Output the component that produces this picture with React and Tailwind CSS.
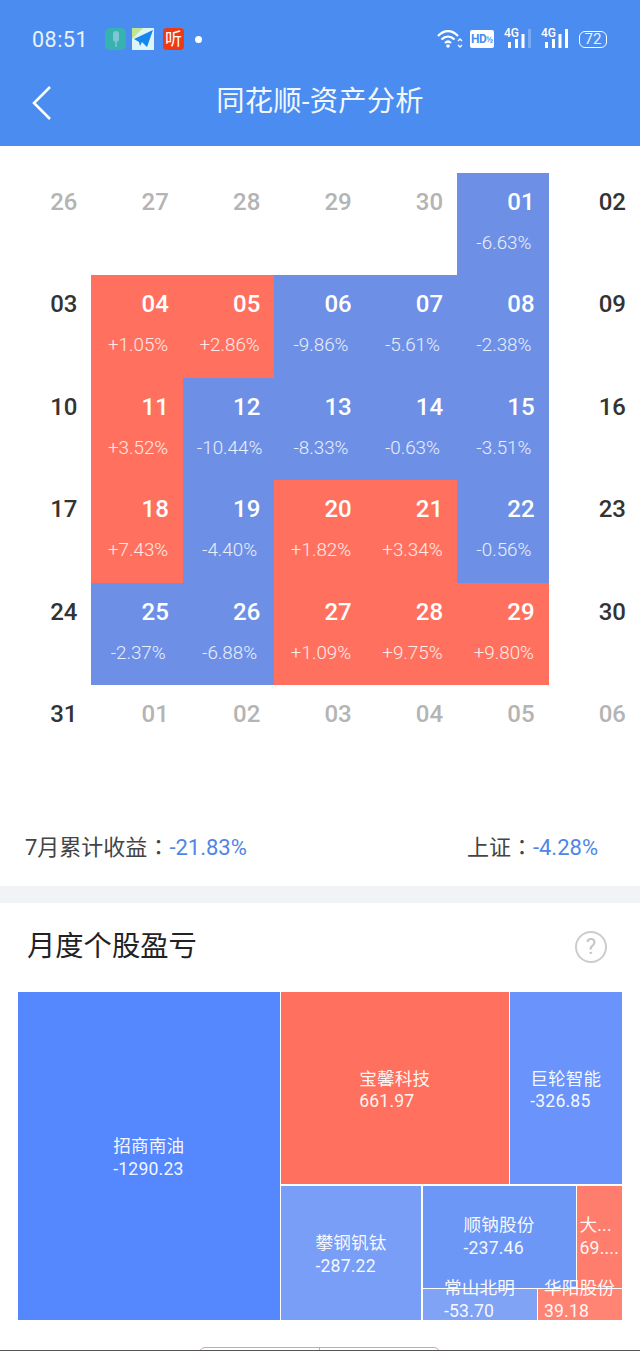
const font = { fontFamily: '"Roboto","Noto Sans CJK SC",sans-serif' };

const weeks = [
  [["26"],["27"],["28"],["29"],["30"],["01","-6.63%","b"],["02",null,null,1]],
  [["03",null,null,1],["04","+1.05%","r"],["05","+2.86%","r"],["06","-9.86%","b"],["07","-5.61%","b"],["08","-2.38%","b"],["09",null,null,1]],
  [["10",null,null,1],["11","+3.52%","r"],["12","-10.44%","b"],["13","-8.33%","b"],["14","-0.63%","b"],["15","-3.51%","b"],["16",null,null,1]],
  [["17",null,null,1],["18","+7.43%","r"],["19","-4.40%","b"],["20","+1.82%","r"],["21","+3.34%","r"],["22","-0.56%","b"],["23",null,null,1]],
  [["24",null,null,1],["25","-2.37%","b"],["26","-6.88%","b"],["27","+1.09%","r"],["28","+9.75%","r"],["29","+9.80%","r"],["30",null,null,1]],
  [["31",null,null,1],["01"],["02"],["03"],["04"],["05"],["06"]],
];

function Cell({ d, p, c, dark }) {
  const bg = c === "b" ? "bg-[#6d90e6]" : c === "r" ? "bg-[#ff715e]" : "";
  const dc = c ? "text-white" : dark ? "text-[#333333]" : "text-[#b4b4b4]";
  return (
    <div className={`${bg} flex flex-col h-[102.4px]`}>
      <div className={`${dc} text-[24px] leading-[28px] font-medium text-right pr-[14px] pt-[15px] tabular-nums`}>{d}</div>
      {p && <div className="text-[18.8px] leading-[20px] text-center pl-[2px] mt-[17px] text-white/85 font-light">{p}</div>}
    </div>
  );
}

function TM({ className, name, val }) {
  return (
    <div className={`${className} min-h-0 flex flex-col justify-center items-center text-white/95 text-[17.6px] leading-[22.5px] tracking-[0.2px]`}>
      <div className="text-left whitespace-nowrap">
        <div>{name}</div>
        <div>{val}</div>
      </div>
    </div>
  );
}

function Bars({ dim }) {
  return (
    <div className="relative w-[26px] h-[20px]">
      <span className="absolute left-0 top-[-2px] text-[12px] leading-[12px] text-white font-medium">4G</span>
      <svg width="28" height="20" viewBox="0 0 28 20" className="absolute inset-0">
        <rect x="4" y="13" width="3" height="6" fill="#fff" />
        <rect x="11" y="10" width="3" height="9" fill="#fff" />
        <rect x="17.5" y="5" width="3" height="14" fill="#fff" />
        <rect x="24" y="0" width="3" height="19" fill={dim ? "#7aa9f3" : "#fff"} />
      </svg>
    </div>
  );
}

export default function App() {
  return (
    <div style={font} className="relative w-[640px] h-[1351px] overflow-hidden bg-white">
      <header className="h-[146px] bg-[#4a8cf0] text-white flex flex-col">
        <div className="h-[78px] pt-[27px] pl-[32px] pr-[33px] flex items-start justify-between">
          <div className="flex items-center h-[24px]">
            <span className="text-[21.5px] leading-[24px] tracking-[0.5px] text-[#eaf2ff] w-[73px] mt-[2px]">08:51</span>
            <span className="w-[21px] h-[22px] rounded-[5px] bg-[#36b3ae] flex items-center justify-center">
              <svg width="10" height="16" viewBox="0 0 10 16"><rect x="2" y="0" width="6" height="11" rx="3" fill="#7fc6d4" /><path d="M5 11v5" stroke="#7fc6d4" strokeWidth="1.5" /></svg>
            </span>
            <span className="ml-[6px] w-[22px] h-[22px] flex items-center justify-center">
              <svg width="22" height="22" viewBox="0 0 22 22">
                <rect width="22" height="22" fill="#dff4f5" />
                <path d="M0 0h11L0 11z" fill="#bfe58f" />
                <path d="M2 11 21 2 15 19 10 14 8 18 7 14z" fill="#1685ee" />
              </svg>
            </span>
            <span className="ml-[9px] w-[21px] h-[22px] rounded-[4px] bg-[#ee3a14] text-[17px] leading-[22px] text-center text-white">听</span>
            <span className="ml-[11px] w-[7px] h-[7px] rounded-full bg-white" />
          </div>
          <div className="flex items-center h-[24px]">
            <svg width="26" height="20" viewBox="0 0 26 20" fill="none" stroke="#fff" strokeWidth="2.2">
              <path d="M1 7c6-6.5 14-6.5 20 0" />
              <path d="M4.5 10.5c4-4 9-4 13 0" />
              <path d="M8 14c2-2 4-2 6 0" />
              <circle cx="11" cy="17" r="1.8" fill="#fff" stroke="none" />
              <path d="M21 12l2-2 2 2M21 16l2 2 2-2" strokeWidth="1.3" />
            </svg>
            <span className="ml-[7px] w-[24px] h-[18px] rounded-[2px] bg-white text-[#4a8cf0] text-[12px] leading-[18px] font-bold pl-[1px] tracking-[-0.5px] whitespace-nowrap overflow-hidden">HD<span className="text-[9px] font-bold">½</span></span>
            <span className="ml-[10px]"><Bars dim /></span>
            <span className="ml-[11px]"><Bars /></span>
            <span className="ml-[12px] w-[28px] h-[17px] rounded-[6px] border-[1.5px] border-white text-[15px] leading-[14px] text-center text-[#eaf2ff]">72</span>
          </div>
        </div>
        <div className="relative h-[48px] flex items-center justify-center">
          <svg width="22" height="36" viewBox="0 0 22 36" fill="none" stroke="#fff" strokeWidth="2.6" className="absolute left-[31px] top-[7px]">
            <path d="M19 2 3 18l16 16" />
          </svg>
          <h1 className="text-[28.3px] leading-[48px] font-normal text-[#f2f7ff] tracking-[0.2px]">同花顺-资产分析</h1>
        </div>
      </header>

      <section className="pt-[27px] h-[686px]">
        <div className="grid grid-cols-7">
          {weeks.flat().map(([d, p, c, dark], i) => (
            <Cell key={i} d={d} p={p} c={c} dark={dark} />
          ))}
        </div>
      </section>

      <div className="h-[26px] flex justify-between pl-[25px] pr-[42px] text-[22px] leading-[26px] text-[#444444]">
        <div>7月累计收益<span style={{ fontFamily: '"Noto Sans CJK TC",sans-serif' }}>：</span><span className="text-[#4f86e6]">-21.83%</span></div>
        <div>上证<span style={{ fontFamily: '"Noto Sans CJK TC",sans-serif' }}>：</span><span className="text-[#4f86e6]">-4.28%</span></div>
      </div>

      <div className="mt-[28px] h-[17px] bg-[#f2f3f7]" />

      <div className="h-[89px] pl-[27px] pr-[33px] flex items-center justify-between pb-[1px]">
        <h2 className="text-[28.3px] font-normal leading-[36px] text-[#222222]">月度个股盈亏</h2>
        <span className="w-[32px] h-[32px] rounded-full border-2 border-[#cccccc] text-[#c4c4c4] text-[22px] leading-[28px] text-center">?</span>
      </div>

      <div className="ml-[18px] w-[603.5px] h-[327.5px] flex gap-[1.5px]">
        <TM className="w-[261.5px] bg-[#5588ff] pt-[4px]" name="招商南油" val="-1290.23" />
        <div className="flex-1 flex flex-col gap-[1.5px] min-h-0">
          <div className="h-[192px] shrink-0 flex gap-[1.5px]">
            <TM className="w-[227.5px] bg-[#ff715e] pt-[4px]" name="宝馨科技" val="661.97" />
            <TM className="flex-1 bg-[#6a94fb] pt-[4px]" name="巨轮智能" val="-326.85" />
          </div>
          <div className="flex-1 min-h-0 flex gap-[1.5px]">
            <TM className="w-[140px] bg-[#789ef8] pt-[4px]" name="攀钢钒钛" val="-287.22" />
            <div className="flex-1 flex flex-col gap-[1px] min-h-0">
              <div className="h-[102px] shrink-0 flex gap-[1.5px]">
                <TM className="w-[153px] bg-[#6d97f7]" name="顺钠股份" val="-237.46" />
                <TM className="flex-1 bg-[#ff7d6d]" name="大..." val="69...." />
              </div>
              <div className="flex-1 min-h-0 flex gap-[1px]">
                <TM className="w-[114px] bg-[#80a3f5] pb-[9px]" name="常山北明" val="-53.70" />
                <TM className="flex-1 bg-[#ff8474] pb-[9px]" name="华阳股份" val="39.18" />
              </div>
            </div>
          </div>
        </div>
      </div>

      <div className="absolute left-[199px] top-[1347px] w-[241px] h-[8px] flex rounded-t-[6px] border border-[#eb9c96]">
        <span className="w-[120px] h-full border-r border-[#eb9c96]" />
      </div>
      <div className="absolute left-0 bottom-0 w-full h-[1px] bg-[#555555]" />
    </div>
  );
}
